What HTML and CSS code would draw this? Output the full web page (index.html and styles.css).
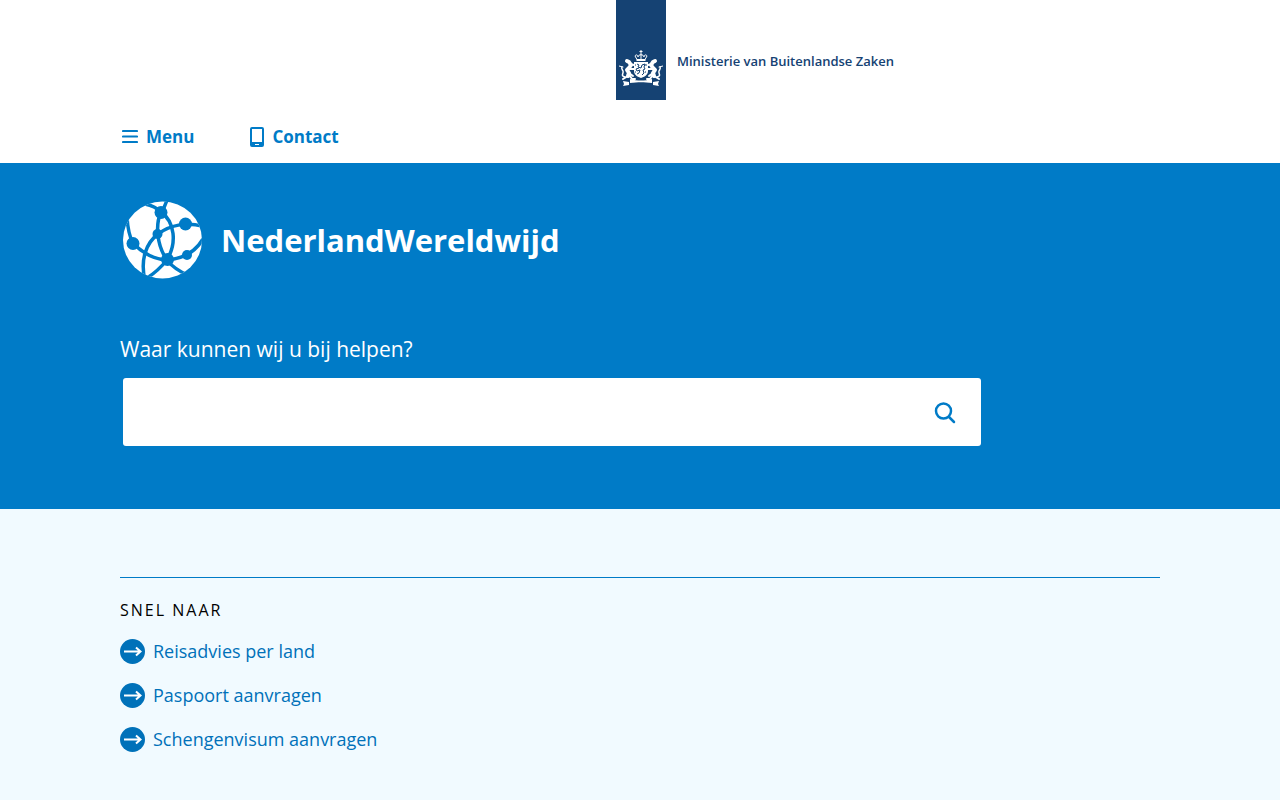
FILE: index.html
```
<!DOCTYPE html>
<html lang="nl">
<head>
  <meta charset="UTF-8">
  <meta name="viewport" content="width=device-width, initial-scale=1">
  <title>NederlandWereldwijd</title>
  <link rel="stylesheet" href="styles.css">
</head>
<body>

  <header class="site-header">
    <div class="logo">
      <div class="ribbon">
        <svg class="emblem" viewBox="0 0 44 37" aria-hidden="true">
          <!-- crown -->
          <g fill="none" stroke="#fff" stroke-width="1">
            <path d="M22 0v4M20.500 1.500h3M18 9.500l-2-3.500c1-2 3-1 3 1 0-3 6-3 6 0 0-2 2-3 3-1l-2 3.500M22 4v5"/>
            <path d="M17.500 10h9" stroke-width="2"/>
          </g>
          <!-- shield with lion -->
          <path d="M15 12h14v9c0 4-4 6-7 7-3-1-7-3-7-7z" fill="#fff"/>
          <path d="M18 14l2 1-1 2 3 1 1-3 3-1-1 3 1 2-2 1 1 3-2 2M20 18l-3 1 1 2 3-1-1 3-2 1" fill="none" stroke="#154273" stroke-width="1"/>
          <path d="M16 15h1M26 22h1M16 22h1M27 14v2" stroke="#154273"/>
          <!-- lions -->
          <g id="lion" fill="none" stroke="#fff" stroke-linecap="round" stroke-linejoin="round">
            <path d="M8 11l2 1 2 3-2 3-2 2 2 3-1 3" stroke-width="4"/>
            <path d="M11 14l4 1M9 19l6 0M10 23l4 3M9 26l-5 3M11 26l2 3h3" stroke-width="2"/>
            <path d="M6 27c-5-1-1-4-2-6s-2-3-1-4" stroke-width="1.500"/>
            <path d="M0 16l4 1" stroke-width="1"/>
          </g>
          <use href="#lion" transform="matrix(-1 0 0 1 44 0)"/>
          <!-- scroll -->
          <path d="M11 29c8 2 14 2 22 0v4c-8-1-14-1-22 0zM4 31l6 1v3l-6 1 1-2zM40 31l-6 1v3l6 1-1-2z" fill="#fff"/>
        </svg>
      </div>
      <span class="ministry">Ministerie van Buitenlandse Zaken</span>
    </div>
    <nav class="main-nav container">
      <button class="nav-button" type="button">
        <svg width="16" height="16" viewBox="0 0 16 16" aria-hidden="true"><path d="M1 2h14M1 7.500h14M1 13h14" stroke="currentColor" stroke-width="2.200" stroke-linecap="round"/></svg>
        Menu
      </button>
      <a class="nav-button" href="#contact">
        <svg width="14" height="20" viewBox="0 0 14 20" aria-hidden="true"><path fill="currentColor" fill-rule="evenodd" d="M2 0h10a2 2 0 0 1 2 2v16a2 2 0 0 1-2 2H2a2 2 0 0 1-2-2V2a2 2 0 0 1 2-2zM2 2v13h10V2zM5 17v1h4v-1z"/></svg>
        Contact
      </a>
    </nav>
  </header>

  <main>
    <section class="hero">
      <div class="container">
        <h1 class="brand">
          <svg class="globe" width="80" height="80" viewBox="0 0 80 80" aria-hidden="true">
            <defs><clipPath id="globe-edge"><ellipse cx="39.500" cy="40" rx="39.500" ry="38.500"/></clipPath></defs>
            <g clip-path="url(#globe-edge)">
              <rect width="80" height="80" fill="#fff"/>
              <g fill="none" stroke="#007bc7" stroke-width="3.500">
                <path d="M22 4Q32 6 38 12Q42 7 44 0"/>
                <path d="M38 12C52 22 54 43 44 60"/>
                <path d="M38 12C32 25 34 46 44 60"/>
                <path d="M82 27C65 21 47 25 35 34C23 43 17 60 22 80"/>
                <path d="M4 17Q5 34 10 43Q25 59 44 60Q69 58 80 39"/>
                <path d="M44 60Q35 71 24 78M44 60Q52 70 65 75"/>
              </g>
              <g fill="#007bc7">
                <circle cx="38" cy="12.500" r="6.500"/>
                <circle cx="62.500" cy="24" r="6.500"/>
                <circle cx="34.500" cy="34" r="5"/>
                <circle cx="10" cy="43.500" r="6.500"/>
                <circle cx="44.500" cy="59.500" r="6.500"/>
                <circle cx="64" cy="55" r="5"/>
              </g>
            </g>
          </svg>
          NederlandWereldwijd
        </h1>
        <form class="search" role="search">
          <label for="search-text">Waar kunnen wij u bij helpen?</label>
          <div class="search-box">
            <input type="text" id="search-text" name="trefwoord">
            <button type="submit" aria-label="Zoeken">
              <svg width="22" height="22" viewBox="0 0 22 22" aria-hidden="true"><g fill="none" stroke="currentColor" stroke-linecap="round"><circle cx="9.500" cy="9" r="7.500" stroke-width="2.500"/><path d="M15 15l5 5" stroke-width="2.500"/></g></svg>
            </button>
          </div>
        </form>
      </div>
    </section>

    <section class="shortcuts container">
      <h2>Snel naar</h2>
      <ul>
        <li><a href="#reisadvies"><svg class="arrow" viewBox="0 0 25 25" aria-hidden="true"><circle cx="12.500" cy="12.500" r="12.500"/><path d="M4 12.500h16M16 8.500l4.500 4-4.500 4"/></svg>Reisadvies per land</a></li>
        <li><a href="#paspoort"><svg class="arrow" viewBox="0 0 25 25" aria-hidden="true"><circle cx="12.500" cy="12.500" r="12.500"/><path d="M4 12.500h16M16 8.500l4.500 4-4.500 4"/></svg>Paspoort aanvragen</a></li>
        <li><a href="#visum"><svg class="arrow" viewBox="0 0 25 25" aria-hidden="true"><circle cx="12.500" cy="12.500" r="12.500"/><path d="M4 12.500h16M16 8.500l4.500 4-4.500 4"/></svg>Schengenvisum aanvragen</a></li>
      </ul>
    </section>
  </main>

</body>
</html>
```
FILE: styles.css
```
* {
  box-sizing: border-box;
}

body {
  font-family: "Open Sans", "Noto Sans", sans-serif;
  font-size: 18px;
  background: #f1faff;
  color: #000;
  margin: 0;
}

.container {
  width: 100%;
  max-width: 1040px;
  margin: 0 auto;
}

.site-header {
  background: #fff;
}

/* ribbon sits in the middle of the page, ministry name to its right */
.logo {
  display: flex;
  gap: 11px;
  padding-left: calc(50% - 24px);
}

.ribbon {
  display: flex;
  flex: none;
  align-items: flex-end;
  justify-content: center;
  width: 50px;
  height: 100px;
  padding-bottom: 13px;
  background: #154273;
}

.emblem {
  width: 44px;
  height: 37px;
}

.ministry {
  padding-top: 51px;
  font-size: 13px;
  line-height: 20px;
  font-weight: 600;
  color: #154273;
}

.main-nav {
  display: flex;
  gap: 52px;
  height: 63px;
  align-items: center;
  padding-top: 10px;
}

.nav-button {
  display: flex;
  align-items: center;
  gap: 8px;
  padding: 0 2px;
  border: none;
  background: none;
  color: #007bc7;
  font-family: inherit;
  font-size: 17px;
  line-height: 24px;
  font-weight: 700;
  text-decoration: none;
  cursor: pointer;
}

.hero {
  padding: 37px 0 60px;
  background: #007bc7;
  color: #fff;
}

.brand {
  display: flex;
  align-items: center;
  gap: 18px;
  margin: 0;
  padding-left: 3px;
  font-size: 31px;
  line-height: 80px;
  font-weight: 700;
}

.globe {
  flex: none;
}

.search {
  max-width: 864px;
  padding-top: 52px;
}

.search label {
  display: block;
  font-size: 21px;
  line-height: 34px;
}

.search-box {
  display: flex;
  margin: 12px 3px 3px;
  border-radius: 3px;
  background: #fff;
}

.search-box input {
  flex: 1;
  min-width: 0;
  height: 68px;
  padding: 0 20px;
  border: none;
  border-radius: 3px;
  background: none;
  font-family: inherit;
  font-size: 21px;
}

.search-box button {
  display: flex;
  align-items: center;
  justify-content: center;
  width: 72px;
  padding: 2px 0 0;
  border: none;
  background: none;
  color: #007bc7;
  cursor: pointer;
}

.shortcuts {
  margin-top: 68px;
  padding: 20px 0 40px;
  border-top: 1px solid #007bc7;
}

.shortcuts h2 {
  margin: 0 0 16px;
  font-size: 16px;
  line-height: 24px;
  font-weight: 400;
  letter-spacing: 2px;
  text-transform: uppercase;
}

.shortcuts ul {
  display: grid;
  gap: 18px;
  margin: 0;
  padding: 0;
  list-style: none;
}

.shortcuts a {
  display: flex;
  align-items: center;
  gap: 8px;
  width: fit-content;
  line-height: 26px;
  color: #0071b9;
  text-decoration: none;
}

.arrow {
  flex: none;
  width: 25px;
  height: 25px;
  fill: #0071b9;
}

.arrow path {
  fill: none;
  stroke: #fff;
  stroke-width: 2;
}
```
